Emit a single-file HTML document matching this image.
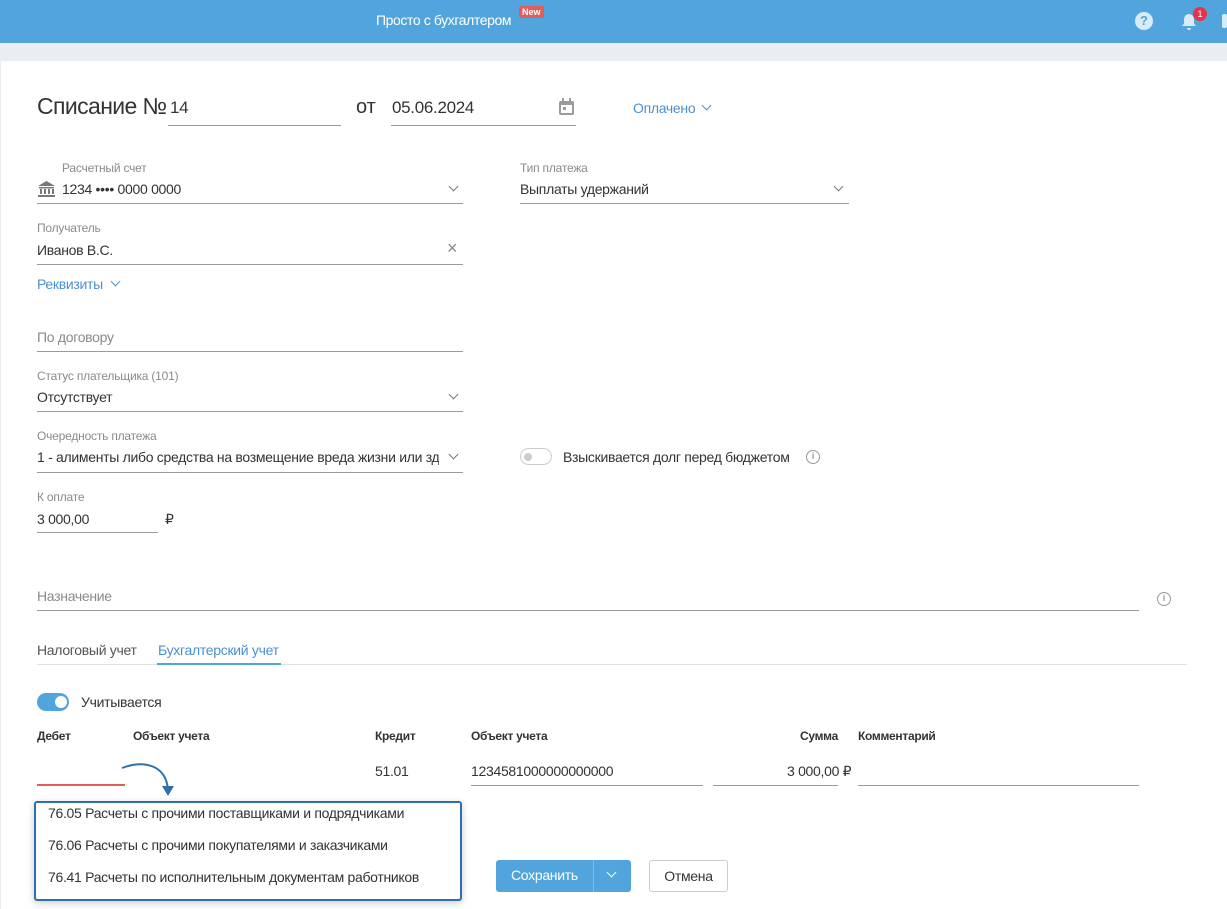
<!DOCTYPE html>
<html><head><meta charset="utf-8"><style>
*{box-sizing:border-box;margin:0;padding:0}
body{width:1227px;height:909px;overflow:hidden;background:#e9eef2;font-family:"Liberation Sans",sans-serif;color:#333;position:relative}
.a{position:absolute;white-space:nowrap}
.hdr{position:absolute;left:0;top:0;width:1227px;height:43px;background:#52a5dc}
.card{position:absolute;left:1px;top:61px;width:1226px;height:848px;background:#fff}
.lbl{font-size:12px;color:#8a8a8a;letter-spacing:-.2px}
.val{font-size:14px;color:#333;letter-spacing:-.3px}
.ln{position:absolute;height:1px;background:#9a9a9a}
.chev{position:absolute;width:7px;height:7px;border-right:1.5px solid #777;border-bottom:1.5px solid #777;transform:rotate(45deg)}
.th{font-size:12px;font-weight:bold;color:#333;letter-spacing:-.3px}
</style></head><body>
<div class="hdr"></div>
<div class="a" style="left:376px;top:12px;color:#fff;font-size:14px;letter-spacing:-.4px">Просто с бухгалтером</div>
<div class="a" style="left:519px;top:6px;background:#e35d5d;color:#fff;font-size:9px;font-weight:bold;padding:1px 3px;border-radius:2px">New</div>
<div class="a" style="left:1135px;top:12px;width:18px;height:18px;border-radius:50%;background:#d8ebf8;color:#52a5dc;font-size:13px;font-weight:bold;text-align:center;line-height:18px">?</div>
<svg class="a" style="left:1180px;top:12px" width="18" height="20"><path d="M9 2c-3 0-5 2.5-5 5.5v4L2 14h14l-2-2.5v-4C14 4.5 12 2 9 2zM7 16h4a2 2 0 0 1-4 0z" fill="#d8ebf8"/></svg>
<div class="a" style="left:1193px;top:7px;width:14px;height:14px;border-radius:50%;background:#e5334b;color:#fff;font-size:9px;text-align:center;line-height:14px">1</div>
<div class="a" style="left:1222px;top:14px;width:5px;height:14px;background:#d8ebf8;border-radius:2px"></div>
<div class="card"></div>

<div class="a" style="left:37px;top:93px;font-size:23px;letter-spacing:-.6px">Списание №</div>
<div class="a val" style="left:170px;top:98px;font-size:17px">14</div><div class="ln" style="left:168px;top:125px;width:173px"></div>
<div class="a" style="left:356px;top:96px;font-size:20px">от</div>
<div class="a val" style="left:392px;top:98px;font-size:17px">05.06.2024</div><div class="ln" style="left:391px;top:125px;width:185px"></div>
<svg class="a" style="left:558px;top:98px" width="17" height="18"><rect x="1" y="3" width="15" height="14" rx="2" fill="#9b9b9b"/><rect x="3" y="7" width="11" height="8" fill="#fff"/><rect x="4" y="0" width="2" height="4" fill="#9b9b9b"/><rect x="11" y="0" width="2" height="4" fill="#9b9b9b"/><rect x="5" y="9" width="3" height="3" fill="#9b9b9b"/></svg>
<div class="a" style="left:633px;top:100px;font-size:14px;color:#4a90d0;letter-spacing:-.3px">Оплачено</div><div class="chev" style="left:703px;top:102px;border-color:#4a90d0"></div>

<div class="a lbl" style="left:62px;top:161px">Расчетный счет</div>
<svg class="a" style="left:37px;top:180px" width="19" height="17"><path d="M1 6L9.5 1L18 6z" fill="#777"/><rect x="2" y="7" width="15" height="1.5" fill="#777"/><rect x="3" y="9" width="2" height="5" fill="#777"/><rect x="7" y="9" width="2" height="5" fill="#777"/><rect x="11" y="9" width="2" height="5" fill="#777"/><rect x="15" y="9" width="2" height="5" fill="#777"/><rect x="1" y="15" width="17" height="2" fill="#777"/></svg>
<div class="a val" style="left:62px;top:181px">1234 •••• 0000 0000</div><div class="chev" style="left:450px;top:183px"></div><div class="ln" style="left:37px;top:203px;width:426px"></div>
<div class="a lbl" style="left:520px;top:161px">Тип платежа</div>
<div class="a val" style="left:520px;top:181px">Выплаты удержаний</div><div class="chev" style="left:835px;top:183px"></div><div class="ln" style="left:520px;top:203px;width:329px"></div>

<div class="a lbl" style="left:37px;top:221px">Получатель</div>
<div class="a val" style="left:37px;top:242px">Иванов В.С.</div><div class="a" style="left:447px;top:238px;font-size:18px;color:#888">×</div><div class="ln" style="left:37px;top:264px;width:426px"></div>
<div class="a" style="left:37px;top:276px;font-size:14px;color:#4a90d0;letter-spacing:-.3px">Реквизиты</div><div class="chev" style="left:112px;top:278px;border-color:#4a90d0"></div>

<div class="a val" style="left:37px;top:329px;color:#8a8a8a">По договору</div><div class="ln" style="left:37px;top:351px;width:426px"></div>
<div class="a lbl" style="left:37px;top:369px">Статус плательщика (101)</div>
<div class="a val" style="left:37px;top:389px">Отсутствует</div><div class="chev" style="left:450px;top:391px"></div><div class="ln" style="left:37px;top:411px;width:426px"></div>
<div class="a lbl" style="left:37px;top:429px">Очередность платежа</div>
<div class="a val" style="left:37px;top:449px;width:402px;overflow:hidden">1 - алименты либо средства на возмещение вреда жизни или здоровью</div><div class="chev" style="left:450px;top:451px"></div><div class="ln" style="left:37px;top:472px;width:426px"></div>
<div class="a" style="left:520px;top:448px;width:32px;height:17px;border-radius:9px;border:1px solid #ccc;background:#fff"></div><div class="a" style="left:524px;top:453px;width:8px;height:8px;border-radius:50%;background:#ccc"></div>
<div class="a val" style="left:563px;top:449px">Взыскивается долг перед бюджетом</div>
<div class="a" style="left:806px;top:450px;width:14px;height:14px;border-radius:50%;border:1.5px solid #999;color:#999;font-size:9px;font-weight:bold;text-align:center;line-height:11px">i</div>

<div class="a lbl" style="left:37px;top:490px">К оплате</div>
<div class="a val" style="left:37px;top:511px">3 000,00</div><div class="ln" style="left:37px;top:532px;width:121px"></div><div class="a val" style="left:165px;top:511px">₽</div>

<div class="a val" style="left:37px;top:588px;color:#8a8a8a">Назначение</div><div class="ln" style="left:37px;top:610px;width:1102px"></div>
<div class="a" style="left:1157px;top:592px;width:14px;height:14px;border-radius:50%;border:1.5px solid #999;color:#999;font-size:9px;font-weight:bold;text-align:center;line-height:11px">i</div>

<div class="a val" style="left:37px;top:642px;color:#555">Налоговый учет</div>
<div class="a val" style="left:158px;top:642px;color:#4a90d0">Бухгалтерский учет</div>
<div class="a" style="left:37px;top:664px;width:1150px;height:1px;background:#e3e3e3"></div>
<div class="a" style="left:157px;top:663px;width:124px;height:2px;background:#52a5dc"></div>

<div class="a" style="left:37px;top:693px;width:32px;height:18px;border-radius:9px;background:#52a5dc"></div><div class="a" style="left:55px;top:696px;width:12px;height:12px;border-radius:50%;background:#fff"></div>
<div class="a val" style="left:81px;top:694px">Учитывается</div>

<div class="a th" style="left:37px;top:729px">Дебет</div>
<div class="a th" style="left:133px;top:729px">Объект учета</div>
<div class="a th" style="left:375px;top:729px">Кредит</div>
<div class="a th" style="left:471px;top:729px">Объект учета</div>
<div class="a th" style="left:800px;top:729px">Сумма</div>
<div class="a th" style="left:858px;top:729px">Комментарий</div>

<div class="a" style="left:37px;top:784px;width:88px;height:2px;background:#e35d5d"></div>
<div class="a val" style="left:375px;top:763px">51.01</div>
<div class="a val" style="left:471px;top:763px">1234581000000000000</div><div class="ln" style="left:471px;top:785px;width:232px"></div>
<div class="a val" style="left:787px;top:763px">3 000,00 ₽</div><div class="ln" style="left:713px;top:785px;width:125px"></div>
<div class="ln" style="left:858px;top:785px;width:281px"></div>

<div class="a" style="left:25px;top:788px;width:435px;height:14px;background:#fff"></div>
<svg class="a" style="left:118px;top:760px" width="60" height="42"><path d="M4 8 C25 0 48 4 50 30" fill="none" stroke="#2f6fae" stroke-width="2"/><path d="M44 26 L50 36 L56 26z" fill="#2f6fae"/></svg>
<div class="a" style="left:34px;top:801px;width:428px;height:100px;border:2.5px solid #2f6fae;border-radius:3px;background:#fff;box-shadow:0 2px 8px rgba(0,0,0,.2)"></div>
<div class="a val" style="left:48px;top:805px">76.05 Расчеты с прочими поставщиками и подрядчиками</div>
<div class="a val" style="left:48px;top:837px">76.06 Расчеты с прочими покупателями и заказчиками</div>
<div class="a val" style="left:48px;top:869px">76.41 Расчеты по исполнительным документам работников</div>

<div class="a" style="left:496px;top:860px;width:135px;height:32px;background:#52a5dc;border-radius:3px"></div>
<div class="a" style="left:593px;top:860px;width:1px;height:32px;background:#7fbde6"></div>
<div class="a" style="left:511px;top:867px;color:#fff;font-size:14px;letter-spacing:-.3px">Сохранить</div>
<div class="chev" style="left:608px;top:869px;border-color:#fff"></div>
<div class="a" style="left:649px;top:860px;width:79px;height:32px;border:1px solid #ccc;border-radius:3px;background:#fff;font-size:14px;text-align:center;line-height:30px;letter-spacing:-.3px">Отмена</div>
</body></html>
